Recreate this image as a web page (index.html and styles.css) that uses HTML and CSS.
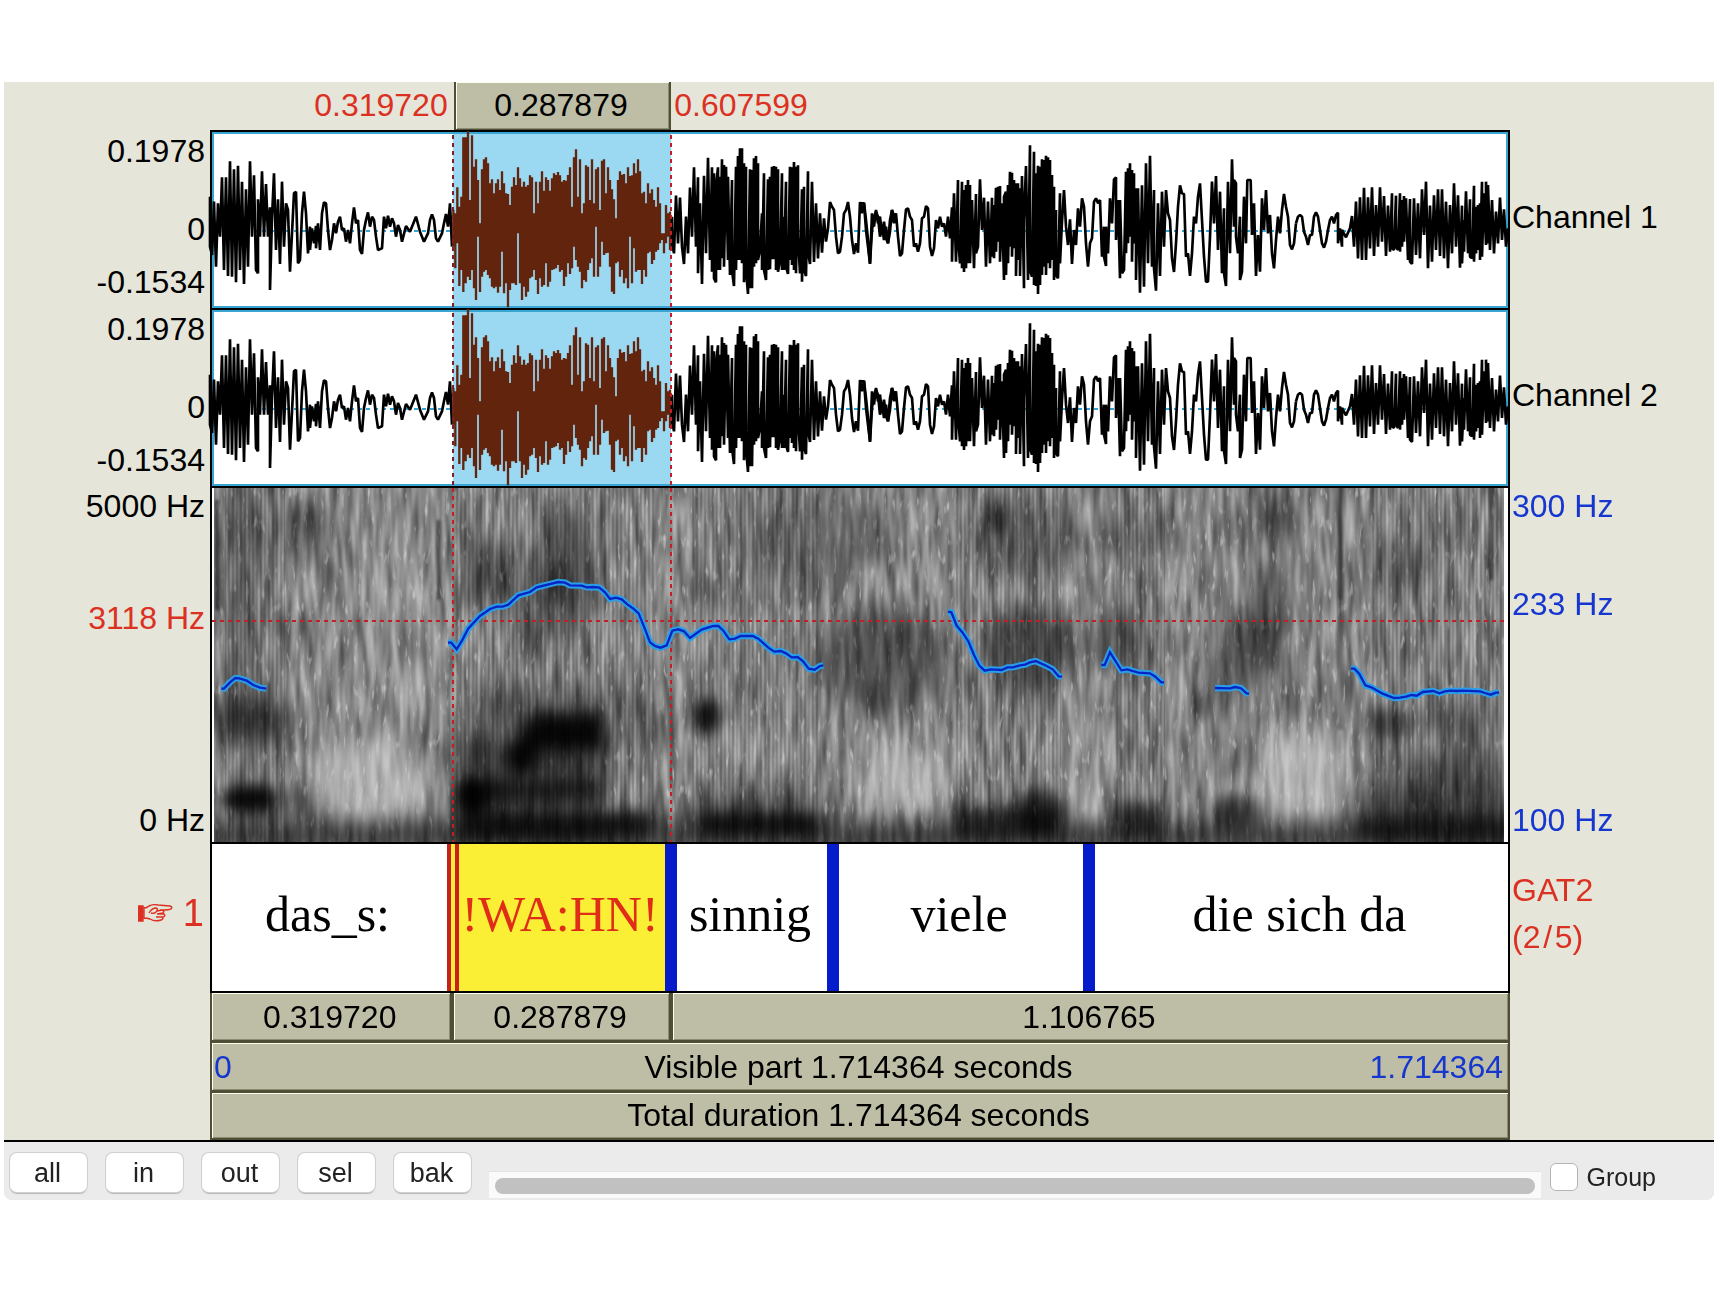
FILE: index.html
```html
<!DOCTYPE html>
<html lang="de">
<head>
<meta charset="utf-8">
<title>Sound and TextGrid editor</title>
<link rel="stylesheet" href="styles.css">
</head>
<body>
<main class="editor">
  <section class="sheet">
    <div class="head">
      <span class="cursor start">0.319720</span>
      <button class="bar top">0.287879</button>
      <span class="cursor">0.607599</span>
    </div>

    <div class="scale left wave-scale"><span>0.1978</span><span class="zero">0</span><span>-0.1534</span></div>
    <div class="panel wave">
      <svg viewBox="212 132 1296 176" preserveAspectRatio="none" role="img" aria-label="Waveform, channel 1">
        <defs>
          <g id="wave">
            <path class="mid" d="M214 231H1506"/>
            <rect class="tint" x="453" y="134" width="218" height="172"/>
            <g class="line" transform="translate(0 70) scale(.33333)">
              <path d="M630,380 630,530 636,555 642,395 648,590 654,400 660,500 666,322 672,600 678,322 684,618 690,274 696,620 702,298 708,637 714,287 720,600 726,335 732,642 738,358 744,590 750,274 756,500 762,316 768,600 774,610 774,388 780,500 786,304 792,500 798,342 804,500 810,412 810,660 816,445 822,310 828,540 834,388 840,582 846,335 852,530 858,400 864,420 870,605 876,490 882,370 888,365 894,580 900,570 906,430 912,365 918,430 924,550 930,470 930,540 936,475 942,520 948,468 948,535 954,460 960,540 966,430 972,397 978,400 984,480 990,540 996,510 1002,460 1008,490 1014,455 1020,440 1026,480 1032,475 1038,515 1044,480 1050,520 1056,460 1062,412 1068,460 1074,450 1080,540 1086,552 1092,480 1098,450 1104,427 1110,470 1116,440 1122,450 1128,500 1134,540 1146,535 1152,440 1158,475 1164,437 1170,470 1176,445 1182,460 1188,500 1194,465 1200,480 1206,515 1218,468 1230,485 1242,455 1248,440 1260,485 1272,515 1284,490 1290,450 1296,433 1302,450 1308,505 1314,515 1326,490 1332,460 1338,432 1344,470 1350,400 1356,530"/>
            </g>
            <g class="line picked" transform="translate(440 70) scale(.33333)">
              <path d="M40,420V530M46,430V595M52,352V520M58,410V648M64,380V600M70,202V666M77,202V640M84,183V620M90,390V630M96,196V600M102,290V655M108,268V690M114,330V500M120,460V666M126,298V620M132,268V605M138,262V600M144,280V615M150,340V625M156,328V650M162,370V655M168,340V650M174,328V668M180,360V650M186,304V545M192,340V670M198,370V640M204,372V712M210,405V660M216,350V640M222,322V640M228,345V645M234,292V490M240,325V640M246,350V690M252,335V650M258,350V680M264,345V665M270,316V625M276,322V620M282,430V600M288,335V630M294,400V672M300,335V625M306,304V650M312,362V645M318,322V580M324,330V650M330,362V635M336,325V600M342,310V598M348,315V595M354,306V585M360,316V605M366,335V600M372,330V648M378,332V620M384,315V580M390,292V612M396,410V595M402,262V530M408,238V570M414,380V590M420,268V605M426,430V655M432,400V630M438,286V635M444,290V600M450,390V580M456,268V565M462,400V620M468,298V470M474,292V620M480,420V590M486,272V515M492,268V555M498,370V550M504,292V548M510,330V590M516,358V665M522,388V672M528,445V580M534,330V575M540,304V620M546,314V600M552,312V640M558,340V625M564,292V655M570,318V500M576,316V640M582,280V535M588,310V605M594,268V600M600,304V600M606,370V642M612,365V600M618,400V620M624,340V550M630,370V545M636,358V582M642,390V570M648,410V545M654,352V540M660,400V520M666,490V510M672,490V550M678,405V520M684,430V500M690,425V540"/>
            </g>
            <g class="line" transform="translate(440 70) scale(.33333)">
              <path d="M696,440 696,520 702,550 708,377 714,520 720,383 726,530 732,582 738,440 744,550 750,353 756,500 762,292 768,530 774,322 774,610 780,400 786,642 792,317 798,550 804,263 810,570 816,292 816,605 822,310 822,625 828,637 828,350 834,292 834,600 840,320 840,600 846,268 846,565 852,285 852,590 858,290 864,570 864,320 870,615 876,330 876,600 882,648 888,290 888,600 894,258 894,570 900,235 900,570 906,235 906,580 912,280 912,637 918,290 918,600 924,672 930,298 930,655 936,300 936,655 942,265 942,590 948,258 948,580 954,280 954,570 960,540 966,430 966,600 972,310 972,600 978,630 984,328 984,600 990,320 990,598 996,290 996,568 1002,288 1002,568 1008,290 1008,600 1014,298 1014,605 1020,570 1026,310 1026,600 1032,440 1032,600 1038,335 1038,590 1044,612 1050,290 1050,570 1056,292 1056,585 1062,276 1062,600 1068,290 1068,610 1074,286 1074,500 1080,610 1086,358 1086,635 1092,350 1092,600 1098,618 1104,304 1104,545 1110,582 1116,335 1122,576 1128,400 1134,565 1140,430 1146,548 1152,445 1158,515 1164,475 1170,396 1176,410 1182,420 1188,500 1194,550 1200,545 1206,500 1212,430 1218,420 1224,396 1230,440 1236,510 1242,552 1248,520 1254,548 1260,396 1266,430 1272,398 1278,450 1284,510 1290,582 1296,430 1302,470 1308,420 1314,460 1320,440 1326,495 1332,455 1338,505 1344,520 1350,450 1356,420 1362,440 1368,430"/>
            </g>
            <g class="line" transform="translate(860 120) scale(.33333)">
              <path d="M0,250 12,250 18,330 30,430 36,330 42,290 48,275 54,290 60,350 66,315 72,360 78,320 84,370 90,335 96,270 102,310 108,280 114,350 120,408 126,400 132,330 138,268 144,265 150,290 156,300 162,380 168,370 174,395 180,370 186,295 192,290 198,258 204,265 210,380 216,408 222,385 228,300 234,325 240,290 246,320 252,310 258,350 264,290 270,355 276,262 276,425 282,220 288,425 294,180 294,350 300,430 306,185 306,445 312,210 312,456 318,195 318,445 324,180 324,430 330,195 330,430 336,240 342,445 348,222 348,400 354,380 360,178 366,330 372,233 378,440 384,245 390,430 396,233 396,410 402,255 402,415 408,203 408,395 414,200 414,365 420,198 420,425 426,250 432,480 432,230 438,215 438,465 444,195 444,430 450,155 450,380 456,158 456,410 462,180 462,385 468,190 468,468 474,190 474,420 480,205 480,468 486,168 492,505 492,300 498,138 504,480 510,76 510,450 516,470 522,95 522,495 528,160 528,498 534,137 534,522 540,140 540,495 546,118 546,465 552,120 552,440 558,107 558,465 564,112 564,430 570,120 570,445 576,165 576,420 582,200 582,480 588,270 588,465 594,475 600,220 600,430 606,305 612,210 618,320 624,375 630,298 636,432 642,330 648,375 654,265 660,320 666,235 672,260 678,370 684,440 690,370 696,355 702,245 708,235 714,250 720,240 726,410 732,320 732,410 738,438 738,320 744,400 750,235 756,310 762,178 768,172 768,360 774,240 780,475 780,240 786,460 792,450 798,155 798,400 804,145 804,370 810,130 810,350 816,150 816,425 822,160 822,370 828,205 828,480 834,205 840,518 846,196 852,500 858,130 864,430 870,107 876,440 882,210 882,445 888,512 894,250 900,468 906,215 912,380 918,210 924,280 930,300 936,415 942,456 948,370 954,260 960,196 966,220 972,222 978,410 984,400 990,468 996,400 1002,290 1008,310 1014,230 1020,190 1026,300 1032,410 1038,485 1044,485 1050,350 1056,185 1062,310 1068,168 1074,390 1080,215 1086,460 1092,265 1092,460 1098,498 1104,185 1110,400 1116,118 1122,320 1122,180 1128,190 1128,350 1134,400 1140,290 1140,480 1146,455 1152,230 1158,370 1162,180 1172,180 1176,345 1182,250 1188,468 1194,345 1200,455 1206,235 1212,330 1218,210 1224,340 1230,285 1236,400 1242,445 1248,360 1254,290 1260,340 1266,270 1272,222 1278,260 1284,290 1290,375 1296,388 1302,370 1308,310"/>
            </g>
            <g class="line" transform="translate(1240 120) scale(.33333)">
              <path d="M168,310 174,290 180,285 186,290 192,335 198,350 204,375 210,345 216,345 222,290 228,277 234,290 240,330 246,370 252,383 258,365 264,330 270,300 276,290 282,310 288,285 294,278 294,370 300,325 306,380 306,330 318,352 330,325 336,288 342,380 348,245 354,415 360,232 366,420 372,203 378,420 384,232 390,385 396,202 402,408 408,255 414,380 420,202 426,365 432,228 438,408 444,257 450,395 456,220 456,385 462,390 468,227 468,380 474,390 480,220 480,395 486,240 486,380 492,228 492,365 498,235 504,420 510,237 510,425 516,432 522,235 528,405 534,250 540,415 546,208 552,345 558,185 564,445 570,257 576,425 582,226 588,390 594,208 600,408 606,208 612,415 618,245 624,445 630,255 636,400 642,190 648,380 654,226 660,443 666,257 666,430 672,300 672,395 678,214 684,400 690,238 690,410 696,415 702,197 702,425 708,260 708,400 714,255 714,390 720,250 720,420 726,185 726,410 732,220 738,375 738,185 744,370 744,195 750,390 756,240 762,400 768,275 774,370 780,233 786,360 792,268 798,380 804,325"/>
            </g>
            <path class="dash dark" d="M453 135V308"/>
            <path class="dash" d="M671 135V308"/>
          </g>
        </defs>
        <use href="#wave"/>
      </svg>
    </div>
    <div class="scale right channel">Channel 1</div>

    <div class="scale left wave-scale"><span>0.1978</span><span class="zero">0</span><span>-0.1534</span></div>
    <div class="panel wave">
      <svg viewBox="212 132 1296 176" preserveAspectRatio="none" role="img" aria-label="Waveform, channel 2"><use href="#wave"/></svg>
    </div>
    <div class="scale right channel">Channel 2</div>

    <div class="scale left hertz"><span>5000 Hz</span><span class="red at-cursor">3118 Hz</span><span class="floor">0 Hz</span></div>
    <div class="panel spectrum">
      <svg viewBox="212 488 1296 354" preserveAspectRatio="none" role="img" aria-label="Spectrogram with pitch contour">
        <defs>
          <filter id="grain" x="0" y="0" width="1" height="1" color-interpolation-filters="sRGB">
            <feTurbulence type="fractalNoise" baseFrequency=".13 .018" numOctaves="2" seed="7"/>
            <feColorMatrix values=".62 0 0 0 .21  .62 0 0 0 .21  .62 0 0 0 .21  0 0 0 0 1"/>
          </filter>
          <filter id="sparks" x="0" y="0" width="1" height="1" color-interpolation-filters="sRGB">
            <feTurbulence type="fractalNoise" baseFrequency=".24 .06" numOctaves="2" seed="21"/>
            <feColorMatrix values="0 0 0 0 .8  0 0 0 0 .8  0 0 0 0 .8  0 3 0 0 -1.85"/>
          </filter>
          <filter id="soft" x="-.5" y="-.5" width="2" height="2"><feGaussianBlur stdDeviation="11"/></filter>
          <filter id="edge" x="-.5" y="-.5" width="2" height="2"><feGaussianBlur stdDeviation="7"/></filter>
          <filter id="thin" x="-.5" y="-.5" width="2" height="2"><feGaussianBlur stdDeviation="1.5"/></filter>
          <pattern id="pulse" width="4" height="10" patternUnits="userSpaceOnUse"><rect width="2" height="10"/></pattern>
          <clipPath id="inside"><rect x="214" y="488" width="1290" height="354"/></clipPath>
        </defs>
        <g clip-path="url(#inside)">
          <rect x="214" y="488" width="1290" height="354" filter="url(#grain)"/>
          <rect x="214" y="488" width="1290" height="354" filter="url(#sparks)"/>
          <g class="pale" filter="url(#soft)">
            <ellipse cx="370" cy="780" rx="60" ry="46"/><ellipse cx="905" cy="780" rx="46" ry="34"/>
            <ellipse cx="1300" cy="780" rx="44" ry="50"/><ellipse cx="760" cy="745" rx="60" ry="20" opacity=".4"/>
            <ellipse cx="1080" cy="770" rx="30" ry="60" opacity=".3"/><ellipse cx="400" cy="620" rx="40" ry="90" opacity=".3"/>
          </g>
          <g filter="url(#soft)">
            <rect x="200" y="822" width="1320" height="30" opacity=".6"/>
            <ellipse cx="250" cy="722" rx="42" ry="24" opacity=".62"/>
            <ellipse cx="275" cy="800" rx="46" ry="12" opacity=".5"/>
            <rect x="457" y="740" width="148" height="105" opacity=".55"/>
            <rect x="470" y="690" width="140" height="60" opacity=".3"/>
            <ellipse cx="490" cy="570" rx="28" ry="34" opacity=".35"/>
            <ellipse cx="565" cy="555" rx="30" ry="50" opacity=".38"/>
            <ellipse cx="550" cy="610" rx="36" ry="40" opacity=".3"/>
            <ellipse cx="650" cy="725" rx="24" ry="24" opacity=".3"/>
            <rect x="695" y="790" width="125" height="40" opacity=".35"/>
            <ellipse cx="820" cy="540" rx="80" ry="44" opacity=".22"/>
            <ellipse cx="880" cy="660" rx="66" ry="54" opacity=".38"/>
            <ellipse cx="1020" cy="540" rx="54" ry="40" opacity=".28"/>
            <ellipse cx="1030" cy="650" rx="44" ry="44" opacity=".45"/>
            <ellipse cx="1120" cy="640" rx="30" ry="32" opacity=".4"/>
            <ellipse cx="1130" cy="530" rx="40" ry="22" opacity=".25"/>
            <ellipse cx="1235" cy="660" rx="26" ry="50" opacity=".35"/>
            <ellipse cx="1270" cy="620" rx="20" ry="60" opacity=".4"/>
            <ellipse cx="1275" cy="515" rx="20" ry="30" opacity=".45"/>
            <rect x="1362" y="780" width="150" height="70" opacity=".5"/>
            <ellipse cx="1400" cy="570" rx="34" ry="30" opacity=".25"/>
            <ellipse cx="1450" cy="765" rx="52" ry="16" opacity=".4"/>
            <ellipse cx="1455" cy="722" rx="34" ry="16" opacity=".4"/>
            <ellipse cx="240" cy="580" rx="30" ry="120" opacity=".2"/>
            <ellipse cx="310" cy="530" rx="34" ry="30" opacity=".25"/>
          </g>
          <g filter="url(#edge)">
            <ellipse cx="248" cy="799" rx="27" ry="15" opacity=".9"/>
            <rect x="528" y="711" width="76" height="20" opacity=".8"/>
            <rect x="520" y="724" width="84" height="26" opacity=".9"/>
            <ellipse cx="522" cy="757" rx="17" ry="17" opacity=".9"/>
            <ellipse cx="473" cy="796" rx="18" ry="20" opacity=".95"/>
            <rect x="462" y="780" width="140" height="20" opacity=".55"/>
            <rect x="457" y="814" width="190" height="22" opacity=".6"/>
            <ellipse cx="628" cy="822" rx="30" ry="14" opacity=".5"/>
            <ellipse cx="706" cy="716" rx="13" ry="19" opacity=".9"/>
            <rect x="698" y="813" width="122" height="22" opacity=".75"/>
            <rect x="953" y="806" width="108" height="32" opacity=".6"/>
            <ellipse cx="1040" cy="812" rx="26" ry="24" opacity=".6"/>
            <ellipse cx="997" cy="518" rx="11" ry="18" opacity=".55"/>
            <rect x="1115" y="802" width="48" height="34" opacity=".6"/>
            <ellipse cx="1235" cy="812" rx="22" ry="18" opacity=".6"/>
            <ellipse cx="1201" cy="702" rx="6" ry="18" opacity=".6"/>
            <ellipse cx="1388" cy="723" rx="24" ry="16" opacity=".5"/>
            <rect x="1356" y="816" width="160" height="20" opacity=".4"/>
          </g>
          <g filter="url(#thin)" opacity=".55">
            <rect x="1338" y="470" width="5" height="130"/><rect x="1338" y="600" width="5" height="130" opacity=".6"/>
            <rect x="215" y="500" width="4" height="110"/><rect x="437" y="520" width="3" height="80"/><rect x="1489" y="480" width="4" height="100"/>
          </g>
          <g fill="url(#pulse)" opacity=".13">
            <rect x="225" y="488" width="60" height="354"/><rect x="455" y="488" width="200" height="354"/>
            <rect x="690" y="488" width="130" height="354"/><rect x="955" y="488" width="106" height="354"/>
            <rect x="1115" y="488" width="50" height="354"/><rect x="1370" y="488" width="134" height="354"/>
          </g>
        </g>
        <path class="dash" d="M212 621H1508M453 488V842M671 488V842"/>
        <defs>
          <g id="pitch">
            <path transform="translate(0 480) scale(.33333)" d="M664,626 672,626 690,607 706,594 718,595 740,602 760,615 780,623 799,626"/>
            <path transform="translate(440 480) scale(.33333)" d="M24,488 34,488 50,508 68,478 85,445 120,408 150,387 170,380 188,380 205,374 235,346 270,336 290,322 355,306 375,308 390,316 425,317 440,322 460,321 478,323 495,337 510,357 528,353 545,358 562,373 580,386 596,400 612,440 630,487 645,498 662,503 680,496 690,470 697,452 715,448 732,454 750,474 785,449 820,438 835,438 850,452 868,478 885,476 902,468 938,468 955,476 985,503 1003,515 1022,513 1038,520 1055,532 1073,531 1090,545 1106,566 1124,569 1140,558 1150,556"/>
            <path transform="translate(900 480) scale(.33333)" d="M144,395 154,397 170,437 188,458 205,484 222,525 238,557 254,572 272,568 305,570 322,562 338,562 360,556 375,554 390,547 407,543 440,558 458,568 476,589 486,590M604,555 614,555 630,517 664,571 682,568 715,578 750,580 766,590 784,607 792,607M945,624 990,625 1005,621 1022,624 1040,640 1047,641"/>
            <path transform="translate(1260 480) scale(.33333)" d="M273,566 283,566 298,582 316,616 334,622 366,640 402,654 420,653 438,650 455,645 470,647 488,636 520,633 538,640 555,634 572,632 590,633 610,632 660,634 675,639 692,644 708,638 717,638"/>
          </g>
        </defs>
        <use class="pitch halo" href="#pitch"/>
        <use class="pitch core" href="#pitch"/>
      </svg>
    </div>
    <div class="scale right hertz blue"><span>300 Hz</span><span class="at-pitch">233 Hz</span><span class="floor">100 Hz</span></div>

    <div class="scale left tier-number red">
      <svg class="hand" viewBox="0 0 35 18" aria-hidden="true">
        <path class="cuff" d="M0 2H5V17H0Z"/>
        <path d="M6 3V15M6 4Q9 4 11 2Q15 0 20 1L32 2Q35 3 33 5Q32 6 22 6M11 9Q14 4 18 4Q21 5 18 8Q16 10 13 9M19 7L24 6Q27 7 25 9L19 10M19 10L26 10Q28 12 25 13L18 13M19 13L24 13Q26 15 23 16Q17 18 12 15Q9 14 6 14"/>
      </svg>
      <span>1</span>
    </div>
    <div class="panel tier">
      <span>das_s:</span><i class="boundary active"></i>
      <span class="chosen">!WA:HN!</span><i class="boundary"></i>
      <span>sinnig</span><i class="boundary"></i>
      <span>viele</span><i class="boundary"></i>
      <span>die sich da</span>
    </div>
    <div class="scale right tier-name red"><span>GAT2</span><span>(2&#8202;/&#8202;5)</span></div>

    <div class="bars">
      <div class="parts">
        <button class="bar">0.319720</button>
        <button class="bar">0.287879</button>
        <button class="bar">1.106765</button>
      </div>
      <button class="bar visible"><span class="blue">0</span><span>Visible part 1.714364 seconds</span><span class="blue">1.714364</span></button>
      <button class="bar total">Total duration 1.714364 seconds</button>
    </div>
  </section>

  <footer class="tools">
    <div class="zooms">
      <button class="tool">all</button>
      <button class="tool">in</button>
      <button class="tool">out</button>
      <button class="tool">sel</button>
      <button class="tool">bak</button>
    </div>
    <div class="track"><div class="thumb" role="scrollbar" aria-label="Scroll" aria-orientation="horizontal" aria-valuenow="0" aria-controls="wave"></div></div>
    <label class="group"><input type="checkbox"> Group</label>
  </footer>
</main>
</body>
</html>
```
FILE: styles.css
```css
* { box-sizing: border-box; }

body {
  margin: 0;
  padding: 82px 6px 92px 4px;
  background: #fff;
  color: #000;
  font: 32px/36px "Liberation Sans", Arial, sans-serif;
}

button { margin: 0; color: inherit; font: inherit; }

.editor {
  overflow: hidden;
  border-radius: 0 0 8px 8px;
  background: #e5e5d9;
}

.sheet {
  display: grid;
  grid-template-columns: 206px minmax(0, 1fr) 204px;
}

.red { color: #dc3122; }
.blue { color: #1537cf; }

/* selection times above the sound */
.head {
  grid-column: 2;
  display: grid;
  grid-template-columns: 319720fr 287879fr 1106765fr;
  align-items: center;
  height: 48px;
  padding: 0 2px;
}
.cursor { padding: 0 3px 2px; color: #dc3122; }
.start { margin-left: -100px; padding-right: 6px; text-align: right; }

.bar {
  height: 50px;
  padding: 0 3px 0 0;
  border: solid #504d36;
  border-width: 0 2px 3px;
  border-radius: 0;
  background: #bebda5;
  box-shadow: inset 1px 1px #fffff0, inset -1px -1px #8c8a70;
  text-align: center;
}
.bar.top { height: 48px; padding-bottom: 2px; border-bottom-width: 1px; }

/* value labels left and right of the panels */
.scale {
  display: flex;
  flex-direction: column;
  padding: 0 2px;
}
.left { grid-column: 1; align-items: flex-end; padding-right: 5px; }
.right { grid-column: 3; }
.wave-scale { padding-top: 3px; padding-bottom: 8px; }
.zero { margin: auto 0 17px; }
.channel { justify-content: center; padding-bottom: 4px; }
.hertz { padding-top: 2px; padding-bottom: 4px; }
.at-cursor { margin-top: 76px; }
.at-pitch { margin-top: 62px; }
.floor { margin-top: auto; }

.panel {
  grid-column: 2;
  border: solid #000;
  border-width: 2px 2px 0;
  background: #fff;
}
.panel svg { display: block; width: 100%; overflow: visible; }
.wave { box-shadow: inset 0 0 0 2px #38a5d3; }
.wave svg { height: 176px; }
.spectrum svg { height: 354px; }

.tint { fill: #9bd9f2; }
.line { fill: none; stroke: #000; stroke-width: 8; stroke-linejoin: bevel; }
.line.picked { stroke: #62240d; stroke-width: 7; }
.mid { stroke: #38a5d3; stroke-width: 2; stroke-dasharray: 4 4; }
.dash { fill: none; stroke: #c41f26; stroke-width: 2; stroke-dasharray: 4 4; }
.dark { stroke: #7c2028; }
.pale { fill: #ddd; opacity: .5; }
.pitch { fill: none; }
.halo { stroke: #2b9ee6; stroke-width: 19; }
.core { stroke: #0625c4; stroke-width: 7; }

/* annotation tier */
.tier {
  display: grid;
  grid-template-columns: 235fr 12px 206fr 12px 150fr 12px 244fr 12px 413fr;
  height: 151px;
  border-bottom-width: 2px;
  font: 50px/56px "Liberation Serif", "Times New Roman", serif;
}
.tier span {
  display: flex;
  align-items: center;
  justify-content: center;
  min-width: 0;
  padding: 0 4px 8px 0;
  white-space: nowrap;
}
.tier .chosen { background: #faef35; color: #e02d17; }
.boundary { background: #061cca; }
.active { border: solid #c8201c; border-width: 0 4px; background: #faef35; }

.tier-number {
  flex-direction: row;
  align-items: center;
  justify-content: flex-end;
  gap: 10px;
  padding: 0 6px 10px 0;
  font-size: 38px;
}
.hand { width: 35px; height: 18px; fill: none; stroke: currentColor; stroke-width: 1.4; }
.cuff { fill: currentColor; }
.tier-name { justify-content: center; gap: 11px; padding-bottom: 8px; }

/* duration bars */
.bars { grid-column: 2; display: grid; }
.parts { display: grid; grid-template-columns: 319720fr 287879fr 1106765fr; }
.visible {
  display: grid;
  grid-template-columns: 140px 1fr 140px;
  align-items: center;
  padding: 0 5px 0 2px;
}
.visible span:first-child { text-align: left; }
.visible span:last-child { text-align: right; }
.total { height: 47px; padding-bottom: 2px; border-bottom-width: 2px; }

/* bottom tool bar */
.tools {
  display: flex;
  align-items: flex-start;
  height: 60px;
  padding: 11px 58px 0 6px;
  border-top: 2px solid #000;
  background: #ebebeb;
}
.zooms { display: flex; gap: 19px; }
.tool {
  width: 77px;
  height: 39px;
  padding: 0 2px 0 0;
  border: 0;
  border-radius: 7px;
  background: #fff;
  box-shadow: 0 0 0 1px #cfcfcf, 0 2px 1px #b8b8b8;
  color: #222;
  font-size: 27px;
  line-height: 38px;
}
.track {
  flex: 1;
  height: 27px;
  margin: 18px 9px 0 18px;
  padding: 6px;
  border-top: 1px solid #e2e2e2;
  background: #fafafa;
}
.thumb { height: 16px; border-radius: 8px; background: #c1c1c1; }
.group {
  display: flex;
  align-items: center;
  gap: 9px;
  margin-top: 9px;
  color: #222;
  font-size: 25px;
  line-height: 30px;
}
.group input {
  appearance: none;
  width: 28px;
  height: 28px;
  margin: 0;
  border: 1px solid #b4b4b4;
  border-radius: 6px;
  background: #fff;
}
```
